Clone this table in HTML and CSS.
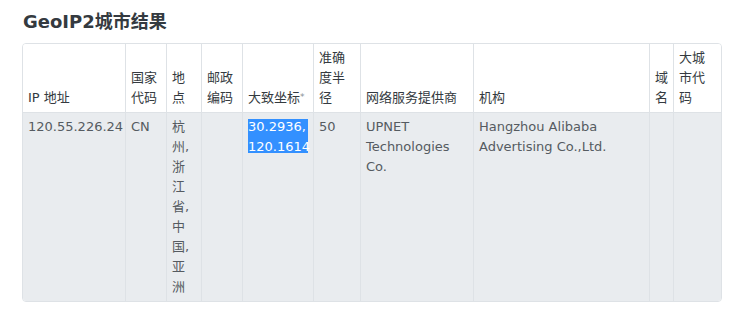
FILE: index.html
```html
<!DOCTYPE html>
<html lang="zh">
<head>
<meta charset="utf-8">
<title>GeoIP2城市结果</title>
<link rel="stylesheet" href="styles.css">
</head>
<body>
<div class="page">
  <h2 class="title">GeoIP2城市结果</h2>
  <div class="table-wrap">
    <table class="result">
      <thead>
        <tr>
          <th class="c-ip">IP 地址</th>
          <th class="c-country">国家代码</th>
          <th class="c-loc">地点</th>
          <th class="c-post">邮政编码</th>
          <th class="c-coord">大致坐标<span class="star">*</span></th>
          <th class="c-acc">准确度半径</th>
          <th class="c-isp">网络服务提供商</th>
          <th class="c-org">机构</th>
          <th class="c-domain">域名</th>
          <th class="c-metro">大城市代码</th>
        </tr>
      </thead>
      <tbody>
        <tr>
          <td>120.55.226.24</td>
          <td>CN</td>
          <td>杭州,浙江省,中国,亚洲</td>
          <td></td>
          <td><span class="sel">30.2936, 120.1614</span></td>
          <td>50</td>
          <td>UPNET Technologies Co.</td>
          <td>Hangzhou Alibaba Advertising Co.,Ltd.</td>
          <td></td>
          <td></td>
        </tr>
      </tbody>
    </table>
  </div>
</div>
</body>
</html>
```

FILE: styles.css
```css
html, body {
  margin: 0;
  padding: 0;
  background: #fff;
}

body {
  font-family: "DejaVu Sans", "Noto Sans CJK SC", sans-serif;
  color: #495057;
}

.page {
  padding: 11px 0 0 22px;
}

.title {
  margin: 0 0 10px 1px;
  font-size: 18px;
  line-height: 22px;
  font-weight: bold;
  color: #343a40;
}

.table-wrap {
  width: 698px;
  border: 1px solid #dee2e6;
  border-radius: 4px;
  overflow: hidden;
}

.result {
  width: 698px;
  table-layout: fixed;
  border-collapse: separate;
  border-spacing: 0;
  font-size: 13px;
  line-height: 20px;
}

.result th,
.result td {
  box-sizing: border-box;
  padding: 4px 5px;
  border-right: 1px solid #dee2e6;
  text-align: left;
}

.result th:last-child,
.result td:last-child {
  border-right: none;
}

.result th {
  font-weight: normal;
  color: #343a40;
  vertical-align: bottom;
  background: #fff;
  border-bottom: 1px solid #dee2e6;
}

.result td {
  vertical-align: top;
  background: #e9ecef;
  color: #555b61;
}

.c-ip { width: 103px; }
.c-country { width: 41px; }
.c-loc { width: 35px; }
.c-post { width: 41px; }
.c-coord { width: 71px; }
.c-acc { width: 47px; }
.c-isp { width: 113px; }
.c-org { width: 176px; }
.c-domain { width: 24px; }
.c-metro { width: 47px; }

.star {
  font-size: 9px;
  color: #8a9096;
  vertical-align: top;
  line-height: 18px;
}

.sel {
  display: block;
  color: #fff;
  background: linear-gradient(to bottom, transparent 2px, #3390ff 2px, #3390ff 36px, transparent 36px);
}
```
